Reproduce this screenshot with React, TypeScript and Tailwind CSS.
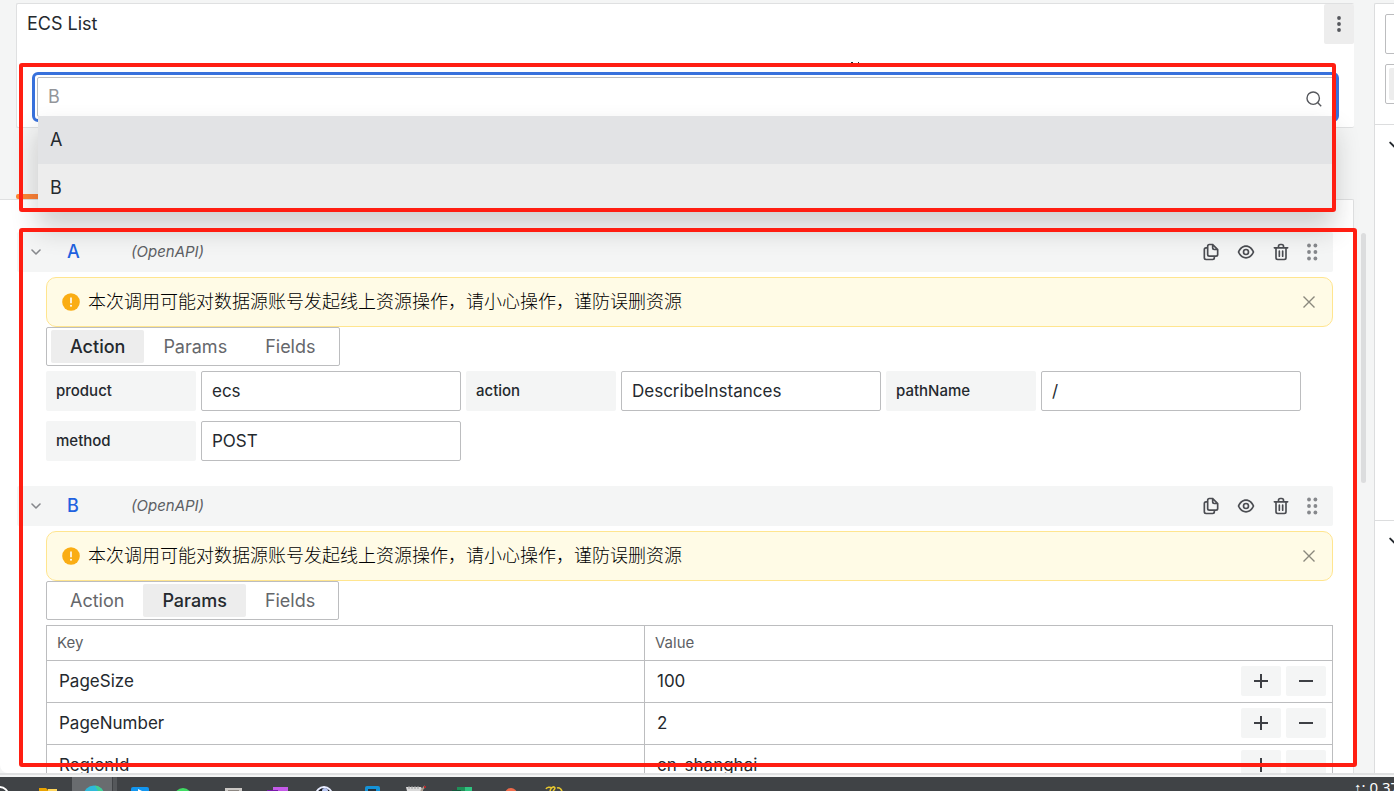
import type { ReactNode } from 'react';

const COPY =
  'M21,8.94a1.31,1.31,0,0,0-.06-.27l0-.09a1.07,1.07,0,0,0-.19-.28h0l-6-6h0a1.07,1.07,0,0,0-.28-.19.32.32,0,0,0-.09,0A.88.88,0,0,0,14.05,2H10A3,3,0,0,0,7,5V6H6A3,3,0,0,0,3,9V19a3,3,0,0,0,3,3h8a3,3,0,0,0,3-3V18h1a3,3,0,0,0,3-3V9S21,9,21,8.94ZM15,5.41,17.59,8H16a1,1,0,0,1-1-1ZM15,19a1,1,0,0,1-1,1H6a1,1,0,0,1-1-1V9A1,1,0,0,1,6,8H7v7a3,3,0,0,0,3,3h5Zm4-4a1,1,0,0,1-1,1H10a1,1,0,0,1-1-1V5a1,1,0,0,1,1-1h3V7a3,3,0,0,0,3,3h3Z';
const EYE =
  'M21.92,11.6C19.9,6.91,16.1,4,12,4S4.1,6.91,2.08,11.6a1,1,0,0,0,0,.8C4.1,17.09,7.9,20,12,20s7.9-2.91,9.92-7.6A1,1,0,0,0,21.92,11.6ZM12,18c-3.17,0-6.17-2.29-7.9-6C5.83,8.29,8.83,6,12,6s6.17,2.29,7.9,6C18.17,15.71,15.17,18,12,18ZM12,8a4,4,0,1,0,4,4A4,4,0,0,0,12,8Zm0,6a2,2,0,1,1,2-2A2,2,0,0,1,12,14Z';
const TRASH =
  'M10,18a1,1,0,0,0,1-1V11a1,1,0,0,0-2,0v6A1,1,0,0,0,10,18ZM20,6H16V5a3,3,0,0,0-3-3H11A3,3,0,0,0,8,5V6H4A1,1,0,0,0,4,8H5V19a3,3,0,0,0,3,3h8a3,3,0,0,0,3-3V8h1a1,1,0,0,0,0-2ZM10,5a1,1,0,0,1,1-1h2a1,1,0,0,1,1,1V6H10Zm7,14a1,1,0,0,1-1,1H8a1,1,0,0,1-1-1V8H17Zm-3-1a1,1,0,0,0,1-1V11a1,1,0,0,0-2,0v6A1,1,0,0,0,14,18Z';

const WARNING_TEXT =
  '本次调用可能对数据源账号发起线上资源操作\uff0c请小心操作\uff0c谨防误删资源';

const fields = [
  { name: 'product', value: 'ecs' },
  { name: 'action', value: 'DescribeInstances' },
  { name: 'pathName', value: '/' },
  { name: 'method', value: 'POST' },
];

const params = [
  { name: 'PageSize', value: '100' },
  { name: 'PageNumber', value: '2' },
  { name: 'RegionId', value: 'cn-shanghai' },
];

function IconButton({ label, path }: { label: string; path: string }) {
  return (
    <button type="button" aria-label={label} className="text-[#4b4d52]">
      <svg viewBox="0 0 24 24" className="size-5 fill-current">
        <path d={path} />
      </svg>
    </button>
  );
}

function Chevron({ className }: { className: string }) {
  return (
    <svg viewBox="0 0 10 10" className={className} fill="none" stroke="currentColor">
      <path d="M1 3l4 4 4-4" strokeWidth="1.6" strokeLinecap="round" strokeLinejoin="round" />
    </svg>
  );
}

function DragDots() {
  return (
    <svg viewBox="0 0 20 20" className="ml-[11px] size-5 fill-[#86888c]">
      {[3.5, 10, 16.5].map((y) => (
        <g key={y}>
          <circle cx="7" cy={y} r="1.9" />
          <circle cx="13.4" cy={y} r="1.9" />
        </g>
      ))}
    </svg>
  );
}

function Warning() {
  return (
    <div
      role="alert"
      className="flex h-[50px] items-center rounded-[10px] border border-[#ffe58f] bg-[#fffbe6] pr-4 pl-[15px]"
    >
      <svg viewBox="0 0 18 18" className="size-[18px]">
        <circle cx="9" cy="9" r="8.8" fill="#faad14" />
        <path d="M9 4.6v5.6" stroke="#fff" strokeWidth="1.6" />
        <circle cx="9" cy="12.7" r="1" fill="#fff" />
      </svg>
      <p className="ml-2 flex-1 text-lg font-light text-black">{WARNING_TEXT}</p>
      <button type="button" aria-label="Close" className="text-[#8a887d]">
        <svg viewBox="0 0 14 14" className="size-[14px]" fill="none" stroke="currentColor">
          <path d="M1.5 1.5l11 11M12.5 1.5l-11 11" strokeWidth="1.4" />
        </svg>
      </button>
    </div>
  );
}

function Tabs({ active }: { active: string }) {
  return (
    <div className="flex h-[39px] w-fit rounded-xs border border-[#bcbdbf] px-1 py-[2px]">
      {['Action', 'Params', 'Fields'].map((tab) => (
        <button
          key={tab}
          type="button"
          className={
            tab === active
              ? 'rounded-xs bg-[#ededed] px-[19px] text-lg/5 font-medium text-[#24292e]'
              : 'px-[19px] text-lg/5 text-[#65676b]'
          }
        >
          {tab}
        </button>
      ))}
    </div>
  );
}

function Query({ name, tab, children }: { name: string; tab: string; children: ReactNode }) {
  return (
    <section>
      <header className="flex h-10 items-center rounded-xs bg-[#f4f5f5] pr-[11px] pl-[14px]">
        <button type="button" aria-label="Collapse" className="text-[#86888c]">
          <Chevron className="size-[10px]" />
        </button>
        <h2 className="ml-[26px] w-16 text-lg font-medium text-[#1f62e0]">{name}</h2>
        <em className="flex-1 text-[15px] text-[#5d5f64]">(OpenAPI)</em>
        <div className="flex gap-[15px]">
          <IconButton label="Duplicate query" path={COPY} />
          <IconButton label="Hide query" path={EYE} />
          <IconButton label="Remove query" path={TRASH} />
        </div>
        <DragDots />
      </header>
      <div className="pt-[5px] pl-[29px]">
        <Warning />
        <Tabs active={tab} />
        <div className="pt-[5px]">{children}</div>
      </div>
    </section>
  );
}

function ActionForm() {
  return (
    <div className="flex flex-wrap gap-x-[5px] gap-y-[10px] pb-[25px]">
      {fields.map((field) => (
        <div key={field.name} className="flex gap-[5px]">
          <label
            htmlFor={field.name}
            className="flex h-10 w-[150px] items-center rounded-xs bg-[#f4f5f5] px-[10px] text-[15px] font-medium"
          >
            {field.name}
          </label>
          <input
            id={field.name}
            defaultValue={field.value}
            className="h-10 w-[260px] rounded-xs border border-[#bcbdbf] px-[10px] text-[17px]"
          />
        </div>
      ))}
    </div>
  );
}

function RowButton({ label, path }: { label: string; path: string }) {
  return (
    <button
      type="button"
      aria-label={label}
      className="flex h-[30px] w-10 items-center justify-center rounded-xs bg-[#f4f5f5] text-[#3d3f44]"
    >
      <svg viewBox="0 0 14 14" className="size-[14px]" fill="none" stroke="currentColor">
        <path d={path} strokeWidth="2" />
      </svg>
    </button>
  );
}

function ParamsTable() {
  return (
    <table className="w-full table-fixed border-collapse border border-[#bcbdbf]">
      <thead>
        <tr className="h-[35px] text-left text-[15px] text-[#5d5f64]">
          <th className="w-[46.5%] border border-[#bcbdbf] px-[10px] font-normal">Key</th>
          <th className="border border-[#bcbdbf] px-[10px] font-normal">Value</th>
        </tr>
      </thead>
      <tbody>
        {params.map((param) => (
          <tr key={param.name} className="h-[42px] align-top text-[17px]">
            <td className="border border-[#bcbdbf] px-3 pt-[5px]">
              <input aria-label="Key" defaultValue={param.name} className="block h-[30px] w-full" />
            </td>
            <td className="border border-[#bcbdbf] pt-[5px] pr-[6px] pl-3">
              <div className="flex items-center gap-[5px]">
                <input
                  aria-label={param.name}
                  defaultValue={param.value}
                  className="block h-[30px] min-w-0 flex-1"
                />
                <RowButton label="Add" path="M7 0v14M0 7h14" />
                <RowButton label="Remove" path="M0 7h14" />
              </div>
            </td>
          </tr>
        ))}
      </tbody>
    </table>
  );
}

function VariableSelect() {
  return (
    <div className="absolute inset-x-[15px] top-[68px] rounded-md border-3 border-[#3871dc] bg-white p-[2px]">
      <div className="flex h-10 items-start rounded-xs border border-[#bcbdbf] bg-white pr-[11px] pl-[10px]">
        <input
          aria-label="Variable"
          placeholder="B"
          className="h-9 min-w-0 flex-1 text-lg placeholder:text-[#93959a]"
        />
        <svg
          viewBox="0 0 16 16"
          className="mt-[13px] size-4"
          fill="none"
          stroke="#55575c"
          strokeWidth="1.4"
        >
          <circle cx="7.2" cy="7.2" r="6.2" />
          <path d="M11.6 11.6l3.6 3.6" />
        </svg>
      </div>
      <ul
        role="listbox"
        className="absolute inset-x-[3px] top-[41px] z-10 bg-[#ededed] text-lg shadow-[0_16px_25px_1px_rgba(24,26,27,0.2)]"
      >
        <li role="option" className="flex h-12 items-center bg-[#e2e3e5] px-3">
          A
        </li>
        <li role="option" className="flex h-12 items-center px-3">
          B
        </li>
      </ul>
    </div>
  );
}

function OptionsPane() {
  return (
    <aside className="mt-[3px] w-5 shrink-0 overflow-hidden rounded-tl-xs border-t border-l border-[#dcddde] bg-white text-[#24292e]">
      <div className="flex h-[121px] w-60 flex-col gap-[10px] border-b border-[#dcddde] pt-[10px] pl-[10px]">
        <div className="h-10 rounded-xs border border-[#bcbdbf]" />
        <div className="h-10 rounded-xs border border-[#bcbdbf] p-[3px]">
          <div className="h-8 rounded-xs bg-[#ededed]" />
        </div>
      </div>
      <div className="h-[396px] w-60 border-b border-[#dcddde] pt-[14px] pl-[14px]">
        <Chevron className="size-3" />
      </div>
      <div className="w-60 pt-[14px] pl-[14px]">
        <Chevron className="size-3" />
      </div>
    </aside>
  );
}

function Taskbar() {
  return (
    <footer className="flex h-[18px] shrink-0 overflow-hidden border-t-2 border-[#e0e1e2] bg-[#404346]">
      <div className="flex w-full justify-between border-t-2 border-[#f4f5f5]">
        <svg viewBox="0 0 600 14" className="h-[14px] w-[600px] shrink-0" fill="none">
          <path d="M72 0h40v14H72z" fill="#696c6f" />
          <path d="M113 0h4v14h-4z" fill="#55585b" />
          <circle cx="0" cy="18" r="8" stroke="#fff" strokeWidth="2" />
          <path d="M39 11h7l2 2h9v2H39z" fill="#e8a200" />
          <path d="M48 12h9v2h-9z" fill="#ffd65c" />
          <circle cx="94" cy="19" r="10.5" fill="#2fb9d9" />
          <path d="M95 8.500a10.500 10.500 0 0 1 8 5.500h-5z" fill="#42cf8e" />
          <rect x="131" y="10" width="18" height="12" rx="2" fill="#1296f0" />
          <path d="M138 12l4 2h-4z" fill="#fff" />
          <circle cx="183" cy="20" r="9" fill="#3fdc63" />
          <path d="M225 11h17v3h-17z" fill="#cbc8c5" />
          <path d="M228 13h11v1h-11z" fill="#8d8782" />
          <path d="M273 10h15v4h-15z" fill="#c45ae8" />
          <path d="M267 13h11v1h-11z" fill="#7719aa" />
          <circle cx="324" cy="18" r="8" fill="#17191f" stroke="#e8ecff" strokeWidth="2" />
          <circle cx="325" cy="14" r="3" fill="#b7c5f2" />
          <path d="M365 14v-3a2 2 0 0 1 2-2h11a2 2 0 0 1 2 2v3z" fill="#1593d8" />
          <path d="M368 12h8v2h-8z" fill="#26323c" />
          <path d="M406 10h15l2 4h-16z" fill="#d9d9d9" />
          <path d="M409 9v3m3-3v3m3-3v3m3-3v3" stroke="#999" />
          <path d="M425 9l-4 5" stroke="#a99a8c" strokeWidth="2" />
          <path d="M424 9h2v2h-2z" fill="#b3262a" />
          <path d="M457 10h8v4h-8z" fill="#1f9058" />
          <path d="M465 10h7v4h-7z" fill="#2fc481" />
          <path d="M452 13h9v1h-9z" fill="#10593a" />
          <circle cx="511" cy="17" r="6" fill="#f06a4a" />
          <path
            d="M546 12c1-2 4-2 6-1M550 14c1-4 4-5 5-3 0 1-1 2-2 3M557 11c3-1 4 1 5 3"
            stroke="#e6c62f"
            strokeWidth="1.600"
          />
        </svg>
        <span className="w-10 shrink-0 font-['Noto_Sans'] text-[15px]/5 whitespace-nowrap text-white">
          ↑: 0.37
        </span>
      </div>
    </footer>
  );
}

export default function App() {
  return (
    <div className="relative flex h-screen flex-col overflow-hidden bg-[#f4f5f5] font-[Inter,'Noto_Sans_CJK_SC',sans-serif] text-[#24292e]">
      <div className="flex min-h-0 flex-1">
        <main className="flex min-w-0 flex-1 flex-col">
          <section className="relative mt-[3px] ml-4 h-[125px] shrink-0 rounded-xs border border-r-0 border-[#dfe0e1] bg-white">
            <div className="flex items-start justify-between pl-[10px]">
              <h1 className="text-lg/10">ECS List</h1>
              <button
                type="button"
                aria-label="Panel menu"
                className="flex h-10 w-[30px] items-center justify-center rounded-xs bg-[#ededed]"
              >
                <svg viewBox="0 0 4 16" className="h-4 w-1 fill-[#55575c]">
                  <circle cx="2" cy="2" r="1.900" />
                  <circle cx="2" cy="8" r="1.900" />
                  <circle cx="2" cy="14" r="1.900" />
                </svg>
              </button>
            </div>
            <svg
              viewBox="0 0 10 1"
              className="absolute top-[58px] left-[62.4%] h-px w-[10px] fill-[#24292e]"
            >
              <path d="M0 0h2v1H0zM7 0h1v1H7z" />
            </svg>
            <VariableSelect />
          </section>
          <div className="flex h-[71px] shrink-0 items-end pl-4">
            <div className="h-[5px] w-24 rounded-xs bg-linear-to-r from-[#ff8833] to-[#f55f3e]" />
          </div>
          <div className="min-h-0 flex-1 overflow-hidden rounded-tr-xs rounded-bl-lg border-t border-r border-[#dfe0e1] bg-white pt-8 pr-5 pl-[17px]">
            <Query name="A" tab="Action">
              <ActionForm />
            </Query>
            <Query name="B" tab="Params">
              <ParamsTable />
            </Query>
          </div>
        </main>
        <div className="w-5 shrink-0 pt-[233px] pl-[7px]">
          <div className="h-[250px] w-[5px] rounded-full bg-[#dcddde]" />
        </div>
        <OptionsPane />
      </div>
      <Taskbar />
      {/* highlighted regions */}
      <div className="pointer-events-none absolute top-[63px] right-[58px] left-[19px] z-20 h-[149px] rounded-[3px] border-4 border-[#ff1e12]" />
      <div className="pointer-events-none absolute top-[228px] right-[37px] bottom-6 left-[19px] z-20 rounded-[3px] border-4 border-[#ff1e12]" />
    </div>
  );
}
